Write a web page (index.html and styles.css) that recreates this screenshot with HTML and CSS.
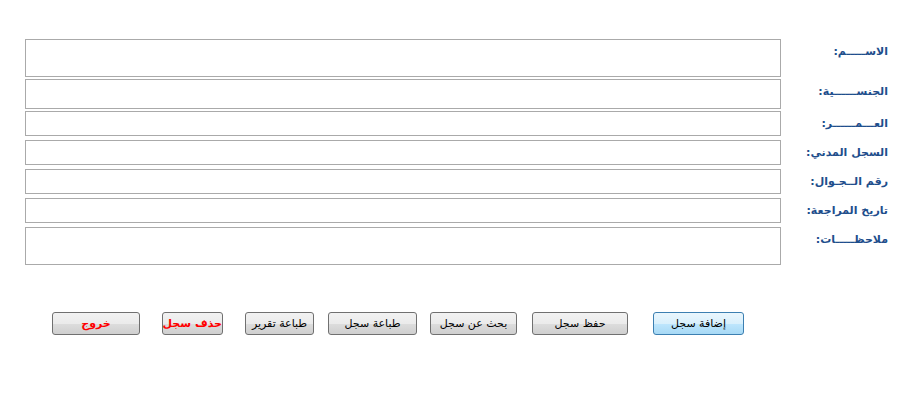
FILE: index.html
```html
<!DOCTYPE html>
<html lang="ar" dir="rtl">
<head>
    <meta charset="UTF-8">
    <meta name="viewport" content="width=device-width, initial-scale=1.0">
    <title>سجل المراجعين</title>
    <link rel="stylesheet" href="styles.css">
</head>
<body>
    <form class="record-form">
        <label class="field-label" for="name">الاســـــم:</label>
        <textarea id="name" class="field tall"></textarea>

        <label class="field-label" for="nationality">الجنســــــية:</label>
        <input type="text" id="nationality" class="field mid">

        <label class="field-label" for="age">العـــمــــــر:</label>
        <input type="text" id="age" class="field short gap-wide">

        <label class="field-label" for="civil">السجل المدني:</label>
        <input type="text" id="civil" class="field short gap-wide">

        <label class="field-label" for="mobile">رقم الــجـوال:</label>
        <input type="text" id="mobile" class="field short gap-wide">

        <label class="field-label" for="visit">تاريخ المراجعة:</label>
        <input type="text" id="visit" class="field short gap-wide">

        <label class="field-label" for="notes">ملاحظـــــات:</label>
        <textarea id="notes" class="field tall last"></textarea>
    </form>

    <div class="actions">
        <button type="button" class="btn btn-default btn-add">إضافة سجل</button>
        <button type="button" class="btn btn-save">حفظ سجل</button>
        <button type="button" class="btn btn-search">بحث عن سجل</button>
        <button type="button" class="btn btn-print">طباعة سجل</button>
        <button type="button" class="btn btn-report">طباعة تقرير</button>
        <button type="button" class="btn btn-danger btn-delete">حذف سجل</button>
        <button type="button" class="btn btn-danger btn-exit">خروج</button>
    </div>
</body>
</html>
```

FILE: styles.css
```css
body {
    margin: 0;
    background-color: #ffffff;
    font-family: "DejaVu Sans", Tahoma, sans-serif;
    font-size: 12px;
    color: #000;
}

.record-form {
    display: grid;
    grid-template-columns: 100px 756px;
    column-gap: 7px;
    padding: 39px 22px 0 25px;
}

.field-label {
    font-weight: bold;
    font-size: 11px;
    color: #1e4e8c;
    text-align: right;
    padding-top: 6px;
    white-space: nowrap;
}

.field {
    display: block;
    width: 100%;
    box-sizing: border-box;
    margin: 0 0 2px 0;
    padding: 2px 3px;
    border: 1px solid #aaaaaa;
    font-family: inherit;
    font-size: 12px;
    resize: none;
    background: #fff;
}

.tall {
    height: 38px;
}

.mid {
    height: 30px;
}

.short {
    height: 25px;
}

.gap-wide {
    margin-bottom: 4px;
}

.last {
    margin-bottom: 0;
}

/* أزرار التحكم */
.actions {
    display: flex;
    padding-right: 166px;
    margin-top: 47px;
}

.btn {
    height: 23px;
    padding: 0;
    box-sizing: border-box;
    border: 1px solid #707070;
    border-radius: 3px;
    background: linear-gradient(#f2f2f2 0%, #ebebeb 50%, #dddddd 51%, #cfcfcf 100%);
    font-family: inherit;
    font-size: 11px;
    color: #000;
    white-space: nowrap;
    cursor: pointer;
}

.btn-default {
    border-color: #3c7fb1;
    background: linear-gradient(#eaf6fd 0%, #d9f0fc 50%, #bee6fd 51%, #a7d9f5 100%);
}

.btn-danger {
    color: #ff0000;
    font-weight: bold;
}

.btn-add { width: 91px; }
.btn-save { width: 96px; margin-right: 25px; }
.btn-search { width: 87px; margin-right: 15px; }
.btn-print { width: 89px; margin-right: 13px; }
.btn-report { width: 69px; margin-right: 14px; }
.btn-delete { width: 61px; margin-right: 22px; }
.btn-exit { width: 88px; margin-right: 22px; }
```
